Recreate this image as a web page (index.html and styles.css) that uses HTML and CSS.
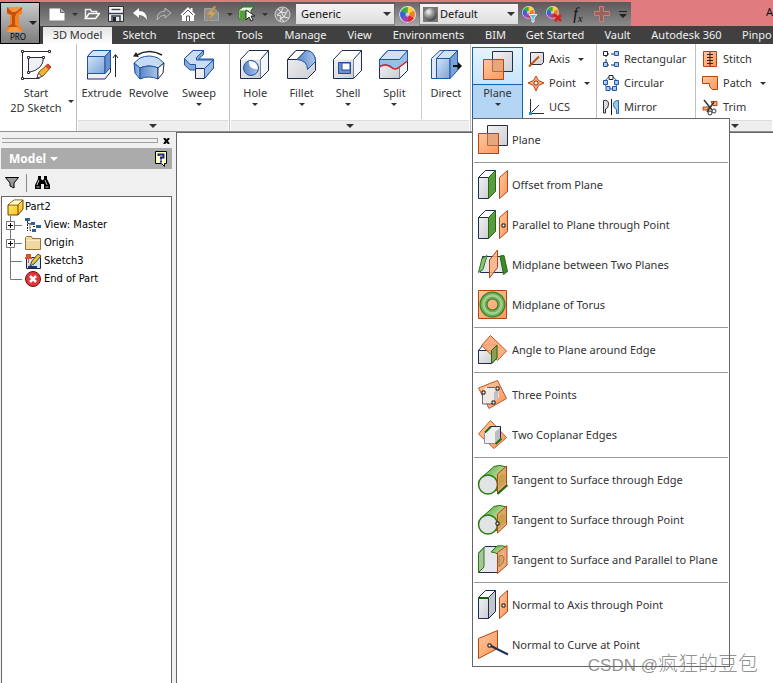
FILE: index.html
```html
<!DOCTYPE html>
<html lang="en">
<head>
<meta charset="utf-8">
<title>Part2</title>
<link rel="stylesheet" href="styles.css">
</head>
<body>
<svg class="defs" aria-hidden="true">
  <defs>
    <linearGradient id="gb" x1="0" y1="0" x2="1" y2="1"><stop offset="0" stop-color="#d3e3f6"/><stop offset="1" stop-color="#7ba3d8"/></linearGradient>
    <linearGradient id="gd" x1="0" y1="0" x2="1" y2="0"><stop offset="0" stop-color="#5c87c4"/><stop offset="1" stop-color="#a9c6ea"/></linearGradient>
    <linearGradient id="gg" x1="0" y1="0" x2="1" y2="1"><stop offset="0" stop-color="#f2f2f4"/><stop offset="1" stop-color="#cdced3"/></linearGradient>
    <linearGradient id="go" x1="0" y1="0" x2="1" y2="1"><stop offset="0" stop-color="#ffc79f"/><stop offset="1" stop-color="#fb975c"/></linearGradient>
    <linearGradient id="gy" x1="0" y1="0" x2="1" y2="1"><stop offset="0" stop-color="#fff27a"/><stop offset="1" stop-color="#f2bd14"/></linearGradient>
    <linearGradient id="gn" x1="0" y1="0" x2="1" y2="1"><stop offset="0" stop-color="#4f9a32"/><stop offset=".5" stop-color="#a5d68c"/><stop offset="1" stop-color="#4f9a32"/></linearGradient>
    <radialGradient id="gs" cx=".35" cy=".3" r=".8"><stop offset="0" stop-color="#f4f4f4"/><stop offset=".5" stop-color="#8a8a8a"/><stop offset="1" stop-color="#303030"/></radialGradient>
    <g id="box">
      <path d="M1.500 8.500L8.500 1.500H18.500L11.500 8.500z" fill="#fff" stroke="#1c2c50"/>
      <path d="M1.500 8.500h10v21h-10z" fill="url(#gg)" stroke="#1c2c50"/>
    </g>
    <path id="pane" d="M22.500 8.500L30.500 1.500V22.500L22.500 29.500z" fill="url(#go)" stroke="#b5440f"/>
    <path id="dot" d="M-1.500-1.500h3v3h-3z" fill="#fff" stroke="#111"/>
    <g id="plane">
      <path d="M10.500 1.500h20v20h-20z" fill="url(#gg)" stroke="#2b2d3c"/>
      <path d="M1.500 9.500h20v20h-20z" fill="url(#go)" stroke="#b5440f"/>
      <path d="M11 10h10v11H11z" fill="#e9a67c"/>
      <path d="M10.500 10v11.500h11" fill="none" stroke="#a0704f"/>
      <path d="M1.500 29.500h20v-20" fill="none" stroke="#b5440f"/>
    </g>
    <g id="cube">
      <path d="M1.500 10.500L10 1.500H29.500V21.500L21.500 29.500h-20z" fill="#fff" stroke="#1c2c50"/>
      <path d="M21.500 10.500L29.500 1.500V21.500L21.500 29.500z" fill="#f4f5f8" stroke="#1c2c50"/>
      <path d="M2 10.500h19.500v18.500H2z" fill="url(#gg)"/>
    </g>
    <g id="wheel">
      <path d="M8 8V0A8 8 0 0 1 15 4z" fill="#ffd12e"/><path d="M8 8L15 4A8 8 0 0 1 15 12z" fill="#ef7f28"/>
      <path d="M8 8L15 12A8 8 0 0 1 8 16z" fill="#d92836"/><path d="M8 8V16A8 8 0 0 1 1 12z" fill="#9c3fc0"/>
      <path d="M8 8L1 12A8 8 0 0 1 1 4z" fill="#2f61d8"/><path d="M8 8L1 4A8 8 0 0 1 8 0z" fill="#3bab49"/>
      <circle cx="8" cy="8" r="2" fill="#fff" opacity=".6"/><circle cx="8" cy="8" r="7.500" fill="none" stroke="#ddd"/>
    </g>
    <g id="cyl">
      <path d="M4 14L17 2.500Q23 0 29 3V18L19 27z" fill="url(#gn)" stroke="#2c7a16"/>
      <circle cx="11" cy="20.500" r="9.500" fill="#e2e3e7" stroke="#2c7a16" stroke-width="1.500"/>
      <path d="M20.500 10L29.500 2V20.500L20.500 29z" fill="#e8a25f" fill-opacity=".85" stroke="#b5440f"/>
      <path d="M22 12q6-4 6 1t-6 9z" fill="#c9a04e"/>
    </g>
  </defs>
</svg>

<header class="top">
  <button class="app" aria-label="Application menu">
    <svg width="38" height="40" viewBox="0 0 38 40"><path d="M6 4h15v7l-3 1v11l3 1v5H6v-5l3-1V12l-3-1z" fill="#f58220"/><path d="M6 4l6 2h3l6-2v2l-6 5-1 3v8l3 2H6l5-3V12L6 10z" fill="#c4500f"/><path d="M6 4h15l-6 5H11z" fill="#f9943a"/><path d="M6 29l4-5h6l5 5z" fill="#fb9a3e"/><path d="M28 18h8l-4 4z" fill="#222"/></svg>
    <span>PRO</span>
  </button>
  <div class="title">
    <div class="qat">
      <button aria-label="New"><svg width="16" height="16"><path d="M.5 2.500h11l4 4v8H.5z" fill="#fff"/><path d="M11.500 2.500v4h4" fill="#bbb" stroke="#666"/></svg></button>
      <button class="drop" aria-label="New options"></button>
      <button aria-label="Open"><svg width="16" height="16"><path d="M1.500 12.500V3.500h5l1 2h5v2" fill="none" stroke="#eee" stroke-width="1.500"/><path d="M1.500 12.500L5 7.500h10.500l-4 5z" fill="none" stroke="#fff" stroke-width="1.500"/></svg></button>
      <button aria-label="Save"><svg width="16" height="16"><path d="M.5.5h15v15H.5z" fill="#e8ebf0" stroke="#333"/><path d="M3 1h10v6H3z" fill="#fff"/><path d="M1 7.500h14M3.500 3.500h9M4 15v-5h8v5" fill="none" stroke="#38404c" stroke-width="1.500"/><path d="M5 11h3v4H5z" fill="#222"/></svg></button>
      <button aria-label="Undo"><svg width="16" height="16"><path d="M1 7l6-5v3q8 0 8 9-3-5-8-5v3z" fill="#fff"/></svg></button>
      <button aria-label="Redo"><svg width="16" height="16"><path d="M15 7L9 2v3Q1 5 1 14q3-5 8-5v3z" fill="#777" stroke="#bbb"/></svg></button>
      <button aria-label="Home"><svg width="16" height="16"><path d="M8 1L.5 8.500l1.500 1V15h12V9.500l1.500-1-3-3V2h-2v2z" fill="#fff"/><path d="M6.500 15v-5h3v5M3 9l5-5 5 5" fill="none" stroke="#555"/></svg></button>
      <button aria-label="Local update"><svg width="16" height="16"><path d="M.5 2.500h10l4 4v8H.5z" fill="#8e8e8e" stroke="#a2a2a2"/><path d="M10 .5L2 9h5l-3 6 9-9H8l4-5.500z" fill="#c9a66c" stroke="#a98a55"/></svg></button>
      <button class="drop" aria-label="Update options"></button>
      <button aria-label="Select"><svg width="18" height="16"><path d="M1 4l4-3h11l-3 3v9H1z" fill="#e6f3e2" stroke="#2c7a16"/><path d="M2 4.500h9v9H2z" fill="#56a03c"/><path d="M8 4v10l3-3 2 4 2-1-2-4h4z" fill="#fff" stroke="#222"/></svg></button>
      <button class="drop" aria-label="Select options"></button>
      <button aria-label="Material"><svg width="17" height="17"><circle cx="8.500" cy="8.500" r="7.500" fill="#8d8d8d" stroke="#d5d5d5"/><path d="M4 3l3 3-4 3 4 1-1 5m3-13l-2 4 5 1 2-3m-2 3l-2 4 5 1m-5-1l-3 1 3 4m0-5l-3-5" fill="none" stroke="#e8e8e8"/></svg></button>
      <label class="combo"><select aria-label="Material"><option>Generic</option></select></label>
      <button class="lit" aria-label="Appearance"><svg width="17" height="17" viewBox="0 0 16 16"><use href="#wheel"/></svg></button>
      <label class="combo ball"><svg width="15" height="15"><path d="M0 0h15v15H0z" fill="#777"/><circle cx="7.500" cy="7.500" r="6.500" fill="url(#gs)"/></svg><select aria-label="Appearance"><option>Default</option></select></label>
      <button aria-label="Adjust appearance"><svg width="17" height="17"><g transform="scale(.8)"><use href="#wheel"/></g><path d="M7 8.500h8L12 12v4h-2v-4z" fill="#43c4f0" stroke="#eee"/></svg></button>
      <button aria-label="Clear appearance"><svg width="17" height="17"><g transform="scale(.8)"><use href="#wheel"/></g><path d="M9 9l6 6m0-6l-6 6" stroke="#d81e1e" stroke-width="2.500"/></svg></button>
      <button class="fx" aria-label="Parameters"><i>f<sub>x</sub></i></button>
      <button aria-label="Add"><svg width="16" height="16"><path d="M5.500.5h4v5h6v4h-6v6h-4v-6h-5v-4h5z" fill="#9a625e" stroke="#c5847c"/></svg></button>
      <button class="more" aria-label="Customize"><svg width="10" height="9"><path d="M1 1.500h8" stroke="#222"/><path d="M1 4h8L5 8z" fill="#222"/></svg></button>
    </div>
    <span class="caption">A</span>
  </div>
  <nav class="tabs">
    <a href="#" class="on">3D Model</a><a href="#">Sketch</a><a href="#">Inspect</a><a href="#">Tools</a><a href="#">Manage</a><a href="#">View</a><a href="#">Environments</a><a href="#">BIM</a><a href="#">Get Started</a><a href="#">Vault</a><a href="#">Autodesk 360</a><a href="#">Pinpo</a>
  </nav>
</header>

<div class="ribbon">
  <section class="panel sketch">
    <div class="tools">
      <button class="big"><svg width="32" height="32"><path d="M2.500 2.500h27M2.500 2.500v27M2.500 29.500h17" stroke="#2b2d3c" fill="none"/><path d="M8.500 8.500h15q0 12-15 15z" stroke="#2b2d3c" fill="#eef0f3"/><g fill="#fff" stroke="#2b2d3c"><path d="M1.500 1.500h2v2h-2zM28.500 1.500h2v2h-2zM1.500 28.500h2v2h-2zM7.500 7.500h2v2h-2zM22.500 7.500h2v2h-2zM7.500 22.500h2v2h-2z"/></g><path d="M17 29l2-6 9-8 3 3-8 9z" fill="#f6b42c" stroke="#7a4d12"/><path d="M25 17l3-2.500 3 3-2.500 3z" fill="#d9453b"/><path d="M17 29l1.500-5 3.500 3.500z" fill="#fff" stroke="#444"/></svg><span>Start<br>2D Sketch</span></button>
      <i class="arr side"></i>
    </div>
  </section>
  <section class="panel create">
    <div class="tools">
      <button class="big"><svg width="32" height="32"><path d="M1.500 7.500L7 1.500H24.500V23L19 30H1.500z" fill="#f0f0f2" stroke="#1c2c50"/><path d="M1.500 7.500L7 1.500H24.500L19 7.500z" fill="#d4e4f7" stroke="#1f55a5"/><path d="M1.500 7.500H19v17H1.500z" fill="url(#gb)" stroke="#1f55a5"/><path d="M19 7.500L24.500 1.500V18.500L19 24.500z" fill="#6a93cd" stroke="#1f55a5"/><path d="M29.500 28V6M27 9l2.500-3.500L32 9" stroke="#222" fill="none"/></svg><span>Extrude</span></button>
      <button class="big"><svg width="32" height="32"><path d="M4 6Q16-1 29 6" stroke="#222" fill="none" stroke-width="1.500"/><path d="M0 7.500L3 3l3 5z" fill="#222"/><path d="M1 14L7 9q9-4 18 0l6 5-6 5q-9-4-18 0z" fill="#c5daf3" stroke="#1f55a5"/><path d="M1 14l6 5v11l-5-6z" fill="url(#gd)" stroke="#1f55a5"/><path d="M7 19q9-4 18 0v11q-9-4-18 0z" fill="url(#gd)" stroke="#1f55a5"/><path d="M25 19l6-5-1 10-5 6z" fill="#fff" stroke="#1c2c50"/></svg><span>Revolve</span></button>
      <button class="big wide"><svg width="32" height="32"><path d="M1.500 9.500L10 1.500h10.500v4l-5 4.500h15v9l-9 10h-9v-8H7l-5.500-5z" fill="#86aade" stroke="#1f55a5"/><path d="M1.500 9.500L10 1.500h10.500l-7 7V11h17l-9 8.500h-9V15.500H7z" fill="#cbddf4" stroke="#1f55a5"/><path d="M12.500 19.500h9v10h-9z" fill="#eee" stroke="#1c2c50"/><path d="M21.500 19.500l9-8.500v8l-9 10.500z" fill="#9dbbe4" stroke="#1f55a5"/></svg><span>Sweep</span><i class="arr"></i></button>
    </div>
    <div class="foot"></div>
  </section>
  <section class="panel modify">
    <div class="tools">
      <button class="big"><svg width="32" height="32"><use href="#cube"/><circle cx="12" cy="19" r="7.500" fill="url(#gd)" stroke="#1f55a5"/><path d="M10 12q-1 9 9 8-1-8-9-8" fill="#fff"/></svg><span>Hole</span><i class="arr"></i></button>
      <button class="big"><svg width="32" height="32"><path d="M1.500 10.500L10 1.500H20Q29 3 29.500 12v9.500L21.500 29.500h-20z" fill="url(#gg)" stroke="#1c2c50"/><path d="M1.500 10.500L10 1.500H20L11 10.500z" fill="#fff" stroke="#1c2c50"/><path d="M11 10.500L20 1.500q9 0 9.500 11l-8 8q0-9-10.500-10z" fill="url(#gd)" stroke="#1f55a5"/></svg><span>Fillet</span><i class="arr"></i></button>
      <button class="big"><svg width="32" height="32"><use href="#cube"/><path d="M6.500 13.500h12v11h-12z" fill="#6990ca" stroke="#1f4f9c"/><path d="M10 14h8v7h-8z" fill="#fff" stroke="#1f4f9c"/></svg><span>Shell</span><i class="arr"></i></button>
      <button class="big"><svg width="32" height="32"><use href="#cube"/><path d="M1.500 10.500L10 1.500H29.500V12l-8 6q-5 4-9-1-5-3-11 0z" fill="#9abde9" stroke="#1f55a5"/><path d="M1.500 10.500L10 1.500H29.500l-8 9z" fill="#d2e2f6" stroke="#1f55a5"/><path d="M1.500 18q6-4 11 0 5 4 9 0l8-6" fill="none" stroke="#e02a2a" stroke-width="1.500"/></svg><span>Split</span><i class="arr"></i></button>
      <div class="rule"></div>
      <button class="big"><svg width="32" height="32"><path d="M1.500 9.500L10 1.500h4v28H1.500z" fill="#dfe9f6" stroke="#1f55a5"/><path d="M6.500 9.500L14 1.500H27.500L20 9.500z" fill="#d2e2f6" stroke="#1f55a5"/><path d="M6.500 9.500H20v20H6.500z" fill="url(#gb)" stroke="#1f55a5"/><path d="M20 9.500l7.500-8v20l-7.500 8z" fill="#7ba0d4" stroke="#1f55a5"/><path d="M23 17h6" stroke="#111" stroke-width="2"/><path d="M28 13l4 4-4 4z" fill="#111"/></svg><span>Direct</span></button>
    </div>
    <div class="foot"></div>
  </section>
  <section class="panel work">
    <div class="tools">
      <div class="anchor">
        <button class="split" aria-expanded="true"><span class="pic"><svg width="32" height="32"><use href="#plane"/></svg></span><span class="lbl">Plane<i class="arr"></i></span></button>
        <ul class="menu">
          <li><button><svg width="32" height="32"><use href="#plane"/></svg>Plane</button></li>
          <li class="sep"><button><svg width="32" height="32"><use href="#box"/><path d="M11.500 8.500L18.500 1.500V22.500L11.500 29.500z" fill="#5b9a3f" stroke="#1f6a10"/><use href="#pane"/></svg>Offset from Plane</button></li>
          <li><button><svg width="32" height="32"><use href="#box"/><path d="M11.500 8.500L18.500 1.500V22.500L11.500 29.500z" fill="#5b9a3f" stroke="#1f6a10"/><use href="#pane"/><use href="#dot" x="26.500" y="16.500"/></svg>Parallel to Plane through Point</button></li>
          <li><button><svg width="32" height="32"><path d="M5.500 7.500h20l3 16h-25z" fill="#e6e7ec" stroke="#1c2c50"/><path d="M1.500 23.500L5 9.500l5-3-4 14z" fill="#8fbf7c" stroke="#2c7a16"/><path d="M23 7l4-.5 3.500 16-4 3z" fill="#3f8a26" stroke="#1f6a10"/><path d="M12.500 11L20.500 1V18.500L12.500 29z" fill="#fbb184" fill-opacity=".85" stroke="#b5440f"/></svg>Midplane between Two Planes</button></li>
          <li><button><svg width="32" height="32"><path d="M1.500 1.500h28v28h-28z" fill="url(#go)" stroke="#b5440f"/><circle cx="15.500" cy="15.500" r="9" fill="none" stroke="#2c7a16" stroke-width="8"/><circle cx="15.500" cy="15.500" r="9" fill="none" stroke="#6fab58" stroke-width="6"/><circle cx="15.500" cy="15.500" r="9" fill="none" stroke="#a3cf90" stroke-width="2.500"/></svg>Midplane of Torus</button></li>
          <li class="sep"><button><svg width="32" height="32"><path d="M1.500 16.500L6 11h14v13l-5 5.500H1.500z" fill="#fff" stroke="#1c2c50"/><path d="M1.500 16.500h13v13h-13z" fill="url(#gg)" stroke="#1c2c50"/><path d="M13.500 1.500L29.500 17l-9 9.500L4.500 11.500z" fill="#fca672" fill-opacity=".9" stroke="#bd5a28"/><path d="M14.500 29.500V16.500L20 11v13z" fill="#8f9d55" stroke="#1f6a10"/></svg>Angle to Plane around Edge</button></li>
          <li class="sep"><button><svg width="32" height="32"><path d="M1.500 9L20.500 1.500 29.500 19.500 12 29.500z" fill="url(#go)" stroke="#bd5a28"/><path d="M6 13l3-5h12l1 10-5 6-11 1z" fill="#eee" fill-opacity=".9"/><path d="M17 13l4-4v10l-4 5z" fill="#bfc0c6"/><path d="M5.500 15v10h10M10 8.500h8" stroke="#667" fill="none"/><use href="#dot" x="6.500" y="13.500"/><use href="#dot" x="20.500" y="9.500"/><use href="#dot" x="16.500" y="23.500"/></svg>Three Points</button></li>
          <li><button><svg width="32" height="32"><path d="M13.500 1.500L29.500 18.500 17 29.500 1.500 15z" fill="url(#go)" stroke="#bd5a28"/><path d="M7.500 14.500l6-7h10v12l-6 5h-10z" fill="#f0f0f3" stroke="#8a8fa0"/><path d="M18 13l6-5v11l-6 6z" fill="#babcc4"/><path d="M13 7.500h10.500V19" fill="none" stroke="#1c2c50"/><path d="M8 13.500l6-6M24.500 19.500l-6 5.500" stroke="#1f6a10" stroke-width="2"/></svg>Two Coplanar Edges</button></li>
          <li class="sep"><button><svg width="32" height="32"><use href="#cyl"/><path d="M20.500 30l10-9" stroke="#1f6a10" stroke-width="2"/></svg>Tangent to Surface through Edge</button></li>
          <li><button><svg width="32" height="32"><use href="#cyl"/><use href="#dot" x="20.500" y="19.500"/></svg>Tangent to Surface through Point</button></li>
          <li><button><svg width="32" height="32"><path d="M2 8.500l6-6h20v18l-8 8H2z" fill="#e6e7ec" stroke="#1c2c50"/><path d="M14 8l6-6q6-1 10 1l-8 9q-2-4-8-4z" fill="url(#gn)" stroke="#2c7a16"/><path d="M1.500 9.500L7 3.500V23L1.500 28.500z" fill="#a5c798" stroke="#2c7a16"/><path d="M20.500 8.500L30 1.500V21L20.500 29.500z" fill="#fba877" fill-opacity=".9" stroke="#b5440f"/><path d="M22 12q5-2 5 3t-5 8z" fill="#d6a468" stroke="#9a8040"/></svg>Tangent to Surface and Parallel to Plane</button></li>
          <li class="sep"><button><svg width="32" height="32"><use href="#box"/><path d="M11.500 8.500L18.500 1.500V22.500L11.500 29.500z" fill="#c3c5cc" stroke="#1c2c50"/><path d="M1 9h10.500" stroke="#145f08" stroke-width="2"/><use href="#pane"/><use href="#dot" x="26.500" y="16.500"/></svg>Normal to Axis through Point</button></li>
          <li><button><svg width="32" height="32"><path d="M1.500 9.500L20.500 1.500V19.500L1.500 29.500z" fill="url(#go)" stroke="#b5440f"/><path d="M12 16l19 9.500" stroke="#1c3257" stroke-width="2"/><use href="#dot" x="12.500" y="16.500"/></svg>Normal to Curve at Point</button></li>
        </ul>
      </div>
      <div class="stack">
        <button><svg width="17" height="17"><path d="M2.500 1.500h13v10l-2 2h-11z" fill="url(#gg)" stroke="#2b2d3c"/><path d="M1 15.500L11 5.500" stroke="#c0500f" stroke-width="2"/></svg>Axis<i class="arr"></i></button>
        <button><svg width="17" height="17"><path d="M8 1l2.500 4.500L16 8l-5.500 2.500L8 16l-2.500-5.500L0 8l5.500-2.500z" fill="#fbb184" stroke="#b5440f"/><circle cx="8" cy="8" r="2" fill="#fff" stroke="#7c2c08"/></svg>Point<i class="arr"></i></button>
        <button><svg width="17" height="17"><path d="M2.500 0v14.500H16M2.500 14.500L11 6" stroke="#2b2d3c" fill="none"/><path d="M1 13h3v3H1z" fill="#2a8be0"/></svg>UCS</button>
      </div>
    </div>
  </section>
  <section class="panel pattern">
    <div class="tools">
      <div class="stack">
        <button><svg width="17" height="17"><path d="M3 3h11M3 14h11M3 3v11" stroke="#222" stroke-dasharray="3 2"/><path d="M.5.5h4v4h-4z" fill="#fff" stroke="#222"/><g fill="#aecbef" stroke="#1f55a5"><path d="M11.500.5h4v4h-4zM.5 11.500h4v4h-4zM11.500 11.500h4v4h-4z"/></g></svg>Rectangular</button>
        <button><svg width="17" height="17"><circle cx="8" cy="8" r="6" fill="none" stroke="#1f55a5"/><path d="M6 .5h4v4H6z" fill="#fff" stroke="#222"/><g fill="#aecbef" stroke="#1f55a5"><path d="M.5 5.500h4v4h-4zM11.500 5.500h4v4h-4zM3 11.500h4v4H3zM9.500 11.500h4v4h-4z"/></g></svg>Circular</button>
        <button><svg width="17" height="17"><path d="M.5 1.500q5-1 5 3.500t-3 5v4h-2z" fill="#dcdde2" stroke="#2b2d3c"/><path d="M8.500 0v16" stroke="#111"/><path d="M15.500 1.500q-5 0-5 4t3 5v4h2z" fill="#9cc8ee" stroke="#1f6ab0"/></svg>Mirror</button>
      </div>
    </div>
  </section>
  <section class="panel surface">
    <div class="tools">
      <div class="stack">
        <button><svg width="17" height="17"><path d="M1.500.5h13v15h-13z" fill="url(#go)" stroke="#b5440f"/><path d="M8 1v14M5 3.500h6M5 6.500h6M5 9.500h6M5 12.500h6" stroke="#3a2418"/></svg>Stitch</button>
        <button><svg width="17" height="17"><path d="M.5 1.500h15v13h-5l-3-3v-3h-7z" fill="url(#go)" stroke="#b5440f"/></svg>Patch<i class="arr"></i></button>
        <button><svg width="17" height="17"><path d="M9 2.500h6v4h-4zM1 8h6l-2 3H1z" fill="url(#go)" stroke="#b5440f"/><path d="M2 1l8 10M12 3L5 13" stroke="#333" stroke-width="1.500"/><circle cx="12" cy="12" r="2" fill="none" stroke="#333"/><circle cx="8" cy="14" r="2" fill="none" stroke="#333"/></svg>Trim</button>
      </div>
    </div>
    <div class="foot"></div>
  </section>
</div>

<main class="work-area">
  <aside class="browser">
    <div class="grip"><span></span><button aria-label="Close"><svg width="7" height="6"><path d="M1 0l5 6M6 0L1 6" stroke="#000" stroke-width="2"/></svg></button></div>
    <div class="bar"><button class="name">Model<i></i></button><button aria-label="Help"><svg width="14" height="16"><path d="M1.500.5h11v12h-2v3l-3-3h-6z" fill="#ffffc8" stroke="#000"/><path d="M4.500 5V3.500h5v3H7v2M7 9.500v2" fill="none" stroke="#1b2a80" stroke-width="2"/></svg></button></div>
    <div class="filters">
      <button aria-label="Filter"><svg width="14" height="13"><path d="M.5 1.500h13L9 7v5l-4-2V7z" fill="#999" stroke="#000"/></svg></button>
      <span></span>
      <button aria-label="Find"><svg width="15" height="13"><path d="M3 0h3v3l1 1h1l1-1V0h3v3l3 6v4H9V8H6v5H0V9l3-6z" fill="#000"/><path d="M4 4L2 9m8-5l2 5M1.500 11h3M10.500 11h3" stroke="#ccc"/></svg></button>
    </div>
    <div class="tree">
      <div class="row root"><svg width="17" height="17"><path d="M1 6l6-5h9v9l-5 6H1z" fill="url(#gy)" stroke="#7a3b06"/><path d="M1 6h10v10M11 6l5-5" fill="none" stroke="#7a3b06"/><path d="M2 5.500l5-4h8l-4 4z" fill="#fffbd0"/></svg>Part2</div>
      <ul>
        <li class="row"><button aria-label="Expand"><svg width="18" height="18"><path d="M5.500 0v18M10 9.500h7" stroke="#777"/><path d="M1.500 5.500h8v8h-8z" fill="#fff" stroke="#777"/><path d="M3 9.500h5M5.500 7v5" stroke="#000"/></svg></button><svg width="17" height="17"><path d="M2.500 4v10M2.500 6.500h4M5 6.500v7h3M8 9.500h4" fill="none" stroke="#222" stroke-dasharray="2 1"/><path d="M0 1h5v3H0zM6 5h4v3H6zM11 8h5v3h-5zM7 12h4v3H7z" fill="#2f5f9c"/></svg>View: Master</li>
        <li class="row"><button aria-label="Expand"><svg width="18" height="18"><path d="M5.500 0v18M10 9.500h7" stroke="#777"/><path d="M1.500 5.500h8v8h-8z" fill="#fff" stroke="#777"/><path d="M3 9.500h5M5.500 7v5" stroke="#000"/></svg></button><svg width="17" height="17"><path d="M.5 14.500V2.500l1-1h5l1 2h8v11z" fill="#f3d7a2" stroke="#9a7433"/><path d="M1 5.500h14" stroke="#fbeccb"/></svg>Origin</li>
        <li class="row"><svg width="18" height="18"><path d="M5.500 0v18M5.500 9.500H17" stroke="#777"/></svg><svg width="17" height="17"><path d="M1.500 4.500h14v11h-14z" fill="#cfe4fa" stroke="#223"/><path d="M3 14h9" stroke="#1b3a7a" stroke-width="2"/><path d="M5 13l2-5 6-7 3 2-7 8z" fill="#f3c531" stroke="#444"/><path d="M1 1h5v3h1v2H4v4H3V6H0V4h1z" fill="#d9552b"/></svg>Sketch3</li>
        <li class="row"><svg width="18" height="18"><path d="M5.500 0v9.500H17" fill="none" stroke="#777"/></svg><svg width="17" height="17"><circle cx="8" cy="8" r="7.500" fill="#e2353b" stroke="#6d1215"/><path d="M5 5l6 6m0-6l-6 6" stroke="#fff" stroke-width="2.500"/></svg>End of Part</li>
      </ul>
    </div>
  </aside>
  <div class="canvas"></div>
</main>
<div class="mark">CSDN @<span>疯狂的豆包</span></div>
</body>
</html>
```
FILE: styles.css
```css
* { box-sizing: border-box; }
html, body { height: 100%; }
body {
  margin: 0;
  display: flex;
  flex-direction: column;
  position: relative;
  overflow: hidden;
  background: #fff;
  color: #333;
  font: 11px/16px "Noto Sans", "Open Sans", sans-serif;
}
button {
  margin: 0;
  padding: 0;
  border: 0;
  background: none;
  color: inherit;
  font: inherit;
  white-space: nowrap;
}
svg { display: block; flex: none; }
ul { list-style: none; margin: 0; padding: 0; }
.defs { position: absolute; width: 0; height: 0; }

/* Title bar and tabs */
.top {
  flex: none;
  display: grid;
  grid-template: 26px 18px / 40px 1fr;
  background: #e07c80;
}
.app {
  grid-row: 1 / 3;
  margin-top: 2px;
  display: grid;
  border: 1px solid #000;
  background: linear-gradient(#c9c9c9, #7d7d7d);
  color: #000;
}
.app > * { grid-area: 1 / 1; }
.app span { align-self: end; font-size: 8px; line-height: 12px; padding-right: 4px; }
.title { display: flex; justify-content: space-between; min-width: 0; padding-top: 2px; }
.qat {
  display: flex;
  align-items: center;
  padding-left: 5px;
  background: linear-gradient(#5a5a5a, #8a8a8a);
}
.qat button { width: 24px; height: 24px; display: grid; place-items: center; flex: none; }
.qat .drop { width: 11px; }
.drop::after, .arr, .foot::after, .combo::after {
  content: "";
  width: 0;
  height: 0;
  border: 3px solid transparent;
  border-top-color: #333;
  border-bottom-width: 0;
}
.qat .lit { margin: 0 1px; background: linear-gradient(#666, #a8a8a8); }
.qat .more { width: 17px; }
.qat .fx { font: italic 16px/20px "Liberation Serif", serif; color: #111; }
.fx sub { font-size: 11px; line-height: 0; vertical-align: -3px; }
.combo {
  display: flex;
  align-items: center;
  width: 98px;
  height: 20px;
  padding: 0 3px 0 5px;
  background: linear-gradient(#f4f4f4, #dedede);
  color: #111;
}
.qat .combo:first-of-type { margin-left: 2px; }
.combo.ball { padding-left: 3px; gap: 2px; }
.combo::after { border-width: 4px 4px 0; }
.combo select {
  flex: 1;
  min-width: 0;
  padding: 0;
  border: 0;
  appearance: none;
  background: none;
  color: inherit;
  font: inherit;
}
.caption { color: #111; line-height: 20px; overflow: hidden; }
.tabs {
  display: grid;
  grid-template-columns: 69px 55px 58px 49px 63px 45px 93px 41px 78px 47px 91px 1fr;
  padding-left: 3px;
  padding-top: 1px;
  background: #404040;
  overflow: hidden;
}
.tabs a { color: #f0f0f0; text-decoration: none; text-align: center; white-space: nowrap; }
.tabs a:last-child { text-align: left; padding-left: 10px; }
.tabs .on { color: #333; background: linear-gradient(#e2e2e2, #fff); }

/* Ribbon */
.ribbon {
  flex: none;
  display: flex;
  height: 88px;
  border-bottom: 1px solid #909090;
  background: #fff;
}
.panel {
  display: flex;
  flex-direction: column;
  flex: none;
  padding: 3px 1px 0;
  border-right: 1px solid #c0c0c0;
}
.tools { display: flex; flex: 1; }
.foot { height: 11px; display: grid; place-items: center; background: #eee; border-top: 1px solid #ddd; }
.foot::after { border-width: 4px 4px 0; }
.sketch { width: 77px; }
.create { width: 153px; }
.modify { width: 241px; }
.modify .tools { padding-left: 1px; }
.work { width: 126px; padding-right: 0; }
.pattern { width: 99px; }
.surface { flex: 1; border: 0; }
.big {
  width: 47px;
  display: flex;
  flex-direction: column;
  align-items: center;
  padding-top: 2px;
}
.big span { margin-top: 4px; line-height: 15px; }
.big .arr { margin-top: 3px; }
.wide { width: 54px; }
.sketch .big { width: 70px; }
.side { align-self: end; margin: 0 0 28px -3px; }
.rule { width: 1px; margin: 0 1px 1px 3px; background: #ccc; }
.anchor { position: relative; }
.split {
  width: 51px;
  height: 72px;
  display: flex;
  flex-direction: column;
  border: 1px solid #0f62b4;
  background: #b4d5f3;
}
.pic {
  width: 100%;
  height: 37px;
  display: grid;
  place-items: center;
  background: linear-gradient(#e6f4fd, #c6e6fa);
  border-bottom: 1px solid #0f62b4;
}
.lbl { width: 100%; display: flex; flex-direction: column; align-items: center; gap: 2px; }
.stack { flex: 1; display: flex; flex-direction: column; padding-left: 5px; }
.stack button { height: 24px; display: flex; align-items: center; gap: 4px; }
.stack .arr { margin-left: 4px; }
.stack .arr, .side, .big .arr, .lbl .arr { border-width: 3px 3px 0; }

/* Drop-down menu of plane commands */
.menu {
  position: absolute;
  z-index: 2;
  top: 71px;
  left: 0;
  width: 258px;
  padding: 1px;
  border: 1px solid #666;
  background: #fff;
}
.menu button {
  width: 100%;
  height: 40px;
  display: flex;
  align-items: center;
  gap: 3px;
  padding-left: 3px;
  text-align: left;
}
.sep { padding-top: 2px; margin-top: 2px; border-top: 1px solid #999; }

/* Model browser */
.work-area { flex: 1; display: flex; min-height: 0; }
.browser {
  width: 176px;
  flex: none;
  display: flex;
  flex-direction: column;
  padding: 5px 4px 0 1px;
  background: #f0f0f0;
}
.grip { display: flex; align-items: center; height: 7px; gap: 5px; padding: 0 2px 0 1px; }
.grip span { flex: 1; height: 5px; border: 1px solid #a0a0a0; border-left: 0; }
.bar {
  display: flex;
  align-items: center;
  justify-content: space-between;
  height: 21px;
  margin-top: 4px;
  padding: 0 4px 0 8px;
  background: #ababab;
}
.name { display: flex; align-items: center; gap: 4px; color: #fff; font-size: 12px; font-weight: bold; }
.name i { border: 4px solid transparent; border-top-color: #fff; border-bottom: 0; }
.filters { display: flex; align-items: center; gap: 7px; height: 27px; padding-left: 4px; }
.filters span { width: 1px; height: 18px; background: #888; margin-right: 1px; }
.tree {
  flex: 1;
  padding-top: 1px;
  border: 1px solid #666;
  border-bottom: 0;
  background: #fff;
  color: #000;
  font: 11px/18px "DejaVu Sans Condensed", "DejaVu Sans", sans-serif;
}
.row { display: flex; align-items: center; height: 18px; gap: 1px; white-space: nowrap; }
.tree li { padding-left: 3px; gap: 2px; }
.root { padding-left: 5px; }
.canvas { flex: 1; border: solid #666; border-width: 1px 0 0 1px; background: #fff; }

.mark {
  position: absolute;
  z-index: 3;
  right: 15px;
  bottom: 5px;
  color: rgba(110, 110, 110, .75);
  font: 17px/24px "Liberation Sans", "Noto Sans CJK SC", sans-serif;
}
.mark span { font-size: 20px; font-weight: 300; }
```
